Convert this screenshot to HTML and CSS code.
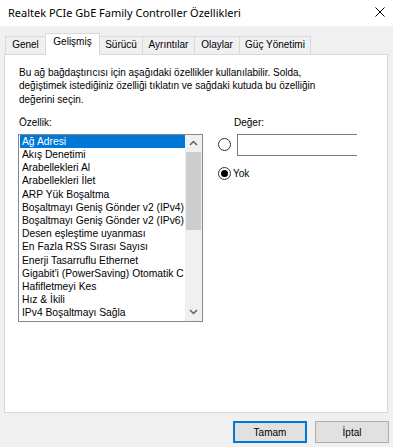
FILE: index.html
```html
<!DOCTYPE html>
<html lang="tr">
<head>
<meta charset="utf-8">
<title>Realtek PCIe GbE Family Controller Özellikleri</title>
<link rel="stylesheet" href="styles.css">
</head>
<body>
<div class="window">
  <div class="titlebar">
    <span class="title">Realtek PCIe GbE Family Controller Özellikleri</span>
    <svg class="close" width="10" height="10" viewBox="0 0 10 10"><path d="M0.5 0.5 L9.5 9.5 M9.5 0.5 L0.5 9.5" stroke="#000" stroke-width="1" fill="none"/></svg>
  </div>
  <div class="tabs">
    <div class="tab tab-genel">Genel</div>
    <div class="tab tab-gelismis active">Gelişmiş</div>
    <div class="tab tab-surucu">Sürücü</div>
    <div class="tab tab-ayrintilar">Ayrıntılar</div>
    <div class="tab tab-olaylar">Olaylar</div>
    <div class="tab tab-guc">Güç Yönetimi</div>
  </div>
  <div class="panel">
    <p class="desc">Bu ağ bağdaştırıcısı için aşağıdaki özellikler kullanılabilir. Solda,<br>değiştimek istediğiniz özelliği tıklatın ve sağdaki kutuda bu özelliğin<br>değerini seçin.</p>
    <div class="cols">
      <div class="left">
        <div class="label">Özellik:</div>
        <div class="listbox">
          <ul class="items">
            <li class="selected">Ağ Adresi</li>
            <li>Akış Denetimi</li>
            <li>Arabellekleri Al</li>
            <li>Arabellekleri İlet</li>
            <li>ARP Yük Boşaltma</li>
            <li>Boşaltmayı Geniş Gönder v2 (IPv4)</li>
            <li>Boşaltmayı Geniş Gönder v2 (IPv6)</li>
            <li>Desen eşleştime uyanması</li>
            <li>En Fazla RSS Sırası Sayısı</li>
            <li>Enerji Tasarruflu Ethernet</li>
            <li>Gigabit'i (PowerSaving) Otomatik C</li>
            <li>Hafifletmeyi Kes</li>
            <li>Hız &amp; İkili</li>
            <li>IPv4 Boşaltmayı Sağla</li>
          </ul>
          <div class="scrollbar">
            <div class="sb-btn"><svg width="9" height="6" viewBox="0 0 9 6"><path d="M1 5 L4.5 1.5 L8 5" stroke="#606060" stroke-width="1.5" fill="none"/></svg></div>
            <div class="track"><div class="thumb"></div></div>
            <div class="sb-btn"><svg width="9" height="6" viewBox="0 0 9 6"><path d="M1 1 L4.5 4.5 L8 1" stroke="#606060" stroke-width="1.5" fill="none"/></svg></div>
          </div>
        </div>
      </div>
      <div class="right">
        <div class="label value-label">Değer:</div>
        <div class="row value-row">
          <span class="radio"></span>
          <input class="textbox" type="text">
        </div>
        <div class="row none-row">
          <span class="radio checked"></span>
          <span class="radio-text">Yok</span>
        </div>
      </div>
    </div>
  </div>
  <div class="buttons">
    <button class="btn default">Tamam</button>
    <button class="btn">İptal</button>
  </div>
</div>
</body>
</html>
```
FILE: styles.css
```css
html, body {
  margin: 0;
  padding: 0;
}
body {
  width: 393px;
  height: 447px;
  overflow: hidden;
  background: #f0f0f0;
  font-family: "Liberation Sans", Arial, sans-serif;
  font-size: 10px;
  color: #000;
}
.window {
  width: 393px;
  height: 447px;
}
.titlebar {
  height: 26px;
  background: #fff;
  display: flex;
  align-items: center;
  justify-content: space-between;
  padding: 0 8px 2px 8px;
  box-sizing: border-box;
}
.title {
  font-family: "Noto Sans", "Open Sans", sans-serif;
  font-size: 11px;
  color: #000;
}
.close {
  display: block;
}
.tabs {
  margin-top: 7px;
  height: 21px;
  display: flex;
  align-items: flex-end;
  padding-left: 5px;
}
.tab {
  flex: none;
  height: 18px;
  line-height: 14px;
  padding-top: 1px;
  box-sizing: border-box;
  border: 1px solid #d9d9d9;
  border-bottom: 0;
  margin-right: -1px;
  background: #f0f0f0;
  white-space: nowrap;
  text-align: center;
}
.tab-genel { width: 41px; }
.tab-gelismis { width: 55px; }
.tab-surucu { width: 44px; }
.tab-ayrintilar { width: 53px; }
.tab-olaylar { width: 46px; }
.tab-guc { width: 72px; }
.tab.active {
  height: 22px;
  margin-bottom: -1px;
  background: #fff;
  position: relative;
  z-index: 1;
}
.panel {
  margin-left: 4px;
  width: 384px;
  height: 359px;
  box-sizing: border-box;
  border: 1px solid #d9d9d9;
  background: #fff;
  padding: 11px 0 0 14px;
}
.desc {
  margin: 0;
  line-height: 13.3px;
  white-space: nowrap;
}
.cols {
  display: flex;
  margin-top: 10px;
  gap: 15px;
}
.label {
  line-height: 13px;
  height: 13px;
}
.left {
  width: 184px;
}
.listbox {
  margin-top: 5px;
  margin-left: -1px;
  width: 185px;
  height: 188px;
  box-sizing: border-box;
  border: 1px solid #828790;
  display: flex;
}
.items {
  list-style: none;
  margin: 0;
  padding: 0 0 0 1px;
  flex: 1;
  min-width: 0;
  overflow: hidden;
  font-size: 10.3px;
}
.items li {
  height: 13.2px;
  line-height: 13.2px;
  padding-left: 2px;
  white-space: nowrap;
  overflow: hidden;
}
.items li.selected {
  background: #0078d7;
  color: #fff;
}
.scrollbar {
  width: 17px;
  background: #f0f0f0;
  display: flex;
  flex-direction: column;
}
.sb-btn {
  height: 17px;
  display: flex;
  align-items: center;
  justify-content: center;
}
.sb-btn svg {
  display: block;
}
.track {
  flex: 1;
}
.thumb {
  height: 78px;
  margin: 0 1px;
  background: #cdcdcd;
}
.right {
  width: 139px;
  overflow: hidden;
}
.value-label {
  padding-left: 16px;
}
.row {
  display: flex;
  align-items: center;
}
.value-row {
  margin-top: 5px;
  height: 22px;
}
.none-row {
  margin-top: 11px;
  height: 13px;
}
.radio {
  flex: none;
  width: 13px;
  height: 13px;
  box-sizing: border-box;
  border: 1px solid #333;
  border-radius: 50%;
  background: #fff;
  display: flex;
  align-items: center;
  justify-content: center;
}
.radio.checked::after {
  content: "";
  width: 7px;
  height: 7px;
  border-radius: 50%;
  background: #000;
}
.textbox {
  flex: none;
  margin: 0 0 0 6px;
  width: 200px;
  height: 22px;
  box-sizing: border-box;
  border: 1px solid #7a7a7a;
  background: #fff;
  padding: 0;
  outline: none;
}
.radio-text {
  margin-left: 2px;
  line-height: 13px;
}
.buttons {
  margin-top: 8px;
  display: flex;
  justify-content: flex-end;
  gap: 8px;
  padding-right: 4px;
}
.btn {
  width: 74px;
  height: 22px;
  box-sizing: border-box;
  border: 1px solid #adadad;
  background: #e1e1e1;
  font-family: "Liberation Sans", Arial, sans-serif;
  font-size: 10px;
  color: #000;
  padding: 0;
  margin: 0;
}
.btn.default {
  border: 2px solid #0078d7;
}
```
